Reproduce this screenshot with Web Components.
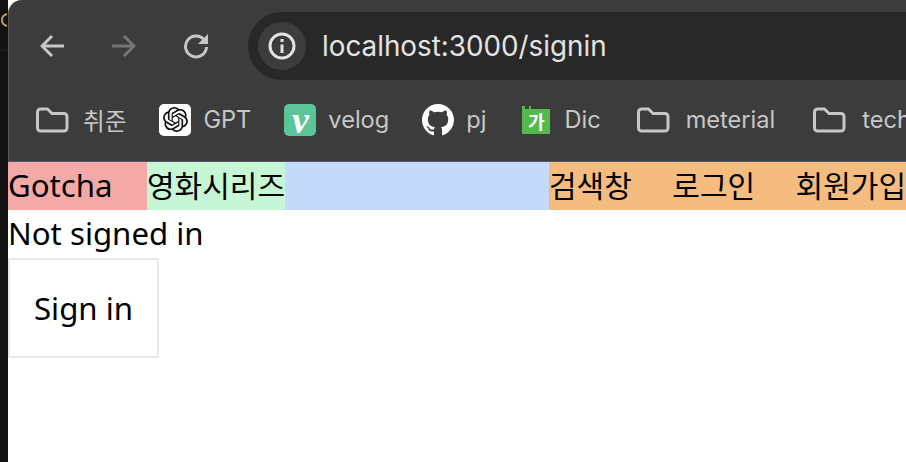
<!DOCTYPE html>
<html lang="ko">
<head>
<meta charset="utf-8">
<title>Gotcha</title>
<style>
  html, body { margin: 0; height: 100%; background: #fff; overflow: hidden; }
</style>
</head>
<body>
<app-window>
  <browser-chrome slot="chrome" url="localhost:3000/signin">
    <bookmark-item icon="folder" label="취준"></bookmark-item>
    <bookmark-item icon="gpt" label="GPT"></bookmark-item>
    <bookmark-item icon="velog" label="velog"></bookmark-item>
    <bookmark-item icon="github" label="pj"></bookmark-item>
    <bookmark-item icon="dic" label="Dic" style="margin-left: 3px; --label-gap: 14px"></bookmark-item>
    <bookmark-item icon="folder" label="meterial" style="margin-left: 2px; --label-gap: 14px"></bookmark-item>
    <bookmark-item icon="folder" label="tech" style="margin-left: 4px; --label-gap: 14px"></bookmark-item>
  </browser-chrome>
  <site-nav></site-nav>
  <signin-panel></signin-panel>
</app-window>

<script>
const ICONS = {
  folder: `<svg width="36" height="26" viewBox="0 0 36 26" fill="none" stroke="#c7c7c7" stroke-width="3" stroke-linejoin="round"><path d="M2.5 5a3 3 0 0 1 3-3h7l4.5 4.5h12a3 3 0 0 1 3 3V21a3 3 0 0 1-3 3H5.5a3 3 0 0 1-3-3z"/></svg>`,
  gpt: `<span class="tile" style="background:#fff"><svg width="25" height="25" viewBox="0 0 24 24" fill="#111"><path d="M22.2819 9.8211a5.9847 5.9847 0 0 0-.5157-4.9108 6.0462 6.0462 0 0 0-6.5098-2.9A6.0651 6.0651 0 0 0 4.9807 4.1818a5.9847 5.9847 0 0 0-3.9977 2.9 6.0462 6.0462 0 0 0 .7427 7.0966 5.98 5.98 0 0 0 .511 4.9107 6.051 6.051 0 0 0 6.5146 2.9001A5.9847 5.9847 0 0 0 13.2599 24a6.0557 6.0557 0 0 0 5.7718-4.2058 5.9894 5.9894 0 0 0 3.9977-2.9001 6.0557 6.0557 0 0 0-.7475-7.0729zm-9.022 12.6081a4.4755 4.4755 0 0 1-2.8764-1.0408l.1419-.0804 4.7783-2.7582a.7948.7948 0 0 0 .3927-.6813v-6.7369l2.02 1.1686a.071.071 0 0 1 .038.052v5.5826a4.504 4.504 0 0 1-4.4945 4.4944zm-9.6607-4.1254a4.4708 4.4708 0 0 1-.5346-3.0137l.142.0852 4.783 2.7582a.7712.7712 0 0 0 .7806 0l5.8428-3.3685v2.3324a.0804.0804 0 0 1-.0332.0615L9.74 19.9502a4.4992 4.4992 0 0 1-6.1408-1.6464zM2.3408 7.8956a4.485 4.485 0 0 1 2.3655-1.9728V11.6a.7664.7664 0 0 0 .3879.6765l5.8144 3.3543-2.0201 1.1685a.0757.0757 0 0 1-.071 0l-4.8303-2.7865A4.504 4.504 0 0 1 2.3408 7.872zm16.5963 3.8558L13.1038 8.364 15.1192 7.2a.0757.0757 0 0 1 .071 0l4.8303 2.7913a4.4944 4.4944 0 0 1-.6765 8.1042v-5.6772a.79.79 0 0 0-.407-.667zm2.0107-3.0231l-.142-.0852-4.7735-2.7818a.7759.7759 0 0 0-.7854 0L9.409 9.2297V6.8974a.0662.0662 0 0 1 .0284-.0615l4.8303-2.7866a4.4992 4.4992 0 0 1 6.6802 4.66zM8.3065 12.863l-2.02-1.1638a.0804.0804 0 0 1-.038-.0567V6.0742a4.4992 4.4992 0 0 1 7.3757-3.4537l-.142.0805L8.704 5.459a.7948.7948 0 0 0-.3927.6813zm1.0976-2.3654l2.602-1.4998 2.6069 1.4998v2.9994l-2.5974 1.4997-2.6067-1.4997Z"/></svg></span>`,
  velog: `<span class="tile velog" style="background:#5bc498">v</span>`,
  github: `<svg width="32" height="32" viewBox="0 0 16 16" fill="#fff"><path d="M8 0C3.58 0 0 3.58 0 8c0 3.54 2.29 6.53 5.47 7.59.4.07.55-.17.55-.38 0-.19-.01-.82-.01-1.49-2.01.37-2.53-.49-2.69-.94-.09-.23-.48-.94-.82-1.13-.28-.15-.68-.52-.01-.53.63-.01 1.08.58 1.23.82.72 1.21 1.87.87 2.33.66.07-.52.28-.87.51-1.07-1.78-.2-3.64-.89-3.64-3.95 0-.87.31-1.59.82-2.15-.08-.2-.36-1.02.08-2.12 0 0 .67-.21 2.2.82.64-.18 1.32-.27 2-.27.68 0 1.36.09 2 .27 1.53-1.04 2.2-.82 2.2-.82.44 1.1.16 1.92.08 2.12.51.56.82 1.27.82 2.15 0 3.07-1.87 3.75-3.65 3.95.29.25.54.73.54 1.48 0 1.07-.01 1.93-.01 2.2 0 .21.15.46.55.38A8.013 8.013 0 0016 8c0-4.42-3.58-8-8-8z"/></svg>`,
  dic: `<span class="dic"><svg width="28" height="28" viewBox="0 0 28 28"><path fill="#52bb4c" d="M0 0h3v3h4V0h2v3h19v25H0z"/></svg><b>가</b></span>`,
};

class AppWindow extends HTMLElement {
  constructor() {
    super();
    this.attachShadow({ mode: "open" });
  }

  connectedCallback() {
    this.shadowRoot.innerHTML = `
      <style>
        :host { display: flex; height: 462px; width: 906px; background: #131313; overflow: hidden; }
        .edge { width: 8px; flex: none; }
        .edge svg { display: block; }
        .main { flex: 1; min-width: 0; display: flex; flex-direction: column; background: #fff; }
      </style>
      <div class="edge">
        <svg width="8" height="60" viewBox="0 0 8 60" fill="none">
          <path d="M7 14c-4 1-5 3-5 6s1 5 5 6" stroke="#b59a6c" stroke-width="2"/>
          <path d="M0 50h8" stroke="#272727"/>
        </svg>
      </div>
      <div class="main">
        <slot name="chrome"></slot>
        <slot></slot>
      </div>
    `;
  }
}

class BrowserChrome extends HTMLElement {
  constructor() {
    super();
    this.attachShadow({ mode: "open" });
  }

  connectedCallback() {
    const url = this.getAttribute("url");
    this.shadowRoot.innerHTML = `
      <style>
        :host {
          display: flex;
          flex-direction: column;
          height: 162px;
          flex: none;
          box-sizing: border-box;
          background: #3c3c3c;
          border-left: 1px solid #575757;
          border-bottom: 1px solid #515a66;
          border-top-left-radius: 14px;
          overflow: hidden;
        }
        .toolbar { display: flex; align-items: center; height: 92px; flex: none; padding-left: 31px; }
        .nav { display: flex; align-items: center; gap: 48px; margin-right: 40px; }
        .nav svg { display: block; }
        .nav svg:last-child { margin-left: -1px; margin-right: -1px; }
        .omnibox {
          flex: 1;
          display: flex;
          align-items: center;
          gap: 16px;
          height: 68px;
          margin-right: -60px;
          padding-left: 10px;
          border-radius: 34px;
          background: #282828;
          font: 27.8px Inter, "Liberation Sans", sans-serif;
          color: #e3e3e3;
        }
        .info {
          width: 48px;
          height: 48px;
          border-radius: 50%;
          background: #3c3c3c;
          display: flex;
          align-items: center;
          justify-content: center;
        }
        .bookmarks {
          display: flex;
          align-items: center;
          gap: 33px;
          flex: 1;
          padding: 0 0 14px 26px;
          white-space: nowrap;
        }
      </style>
      <div class="toolbar">
        <div class="nav">
          <svg width="24" height="24" viewBox="0 0 24 24" fill="none" stroke="#c7c7c7" stroke-width="3"><path d="M24 12H2M12 2 2 12l10 10"/></svg>
          <svg width="24" height="24" viewBox="0 0 24 24" fill="none" stroke="#757575" stroke-width="3"><path d="M0 12h22M12 2l10 10-10 10"/></svg>
          <svg width="26" height="26" viewBox="0 0 26 26" fill="none" stroke="#c7c7c7" stroke-width="3"><path d="M22 8a10.5 10.5 0 1 0 1.5 6"/><path d="M25 1v10H15z" stroke="none" fill="#c7c7c7"/></svg>
        </div>
        <div class="omnibox">
          <span class="info">
            <svg width="28" height="28" viewBox="0 0 28 28" fill="none" stroke="#e3e3e3" stroke-width="3"><circle cx="14" cy="14" r="12"/><path d="M14 12.5V21"/><path d="M14 7v3"/></svg>
          </span>
          <span>${url}</span>
        </div>
      </div>
      <div class="bookmarks"><slot></slot></div>
    `;
  }
}

class BookmarkItem extends HTMLElement {
  constructor() {
    super();
    this.attachShadow({ mode: "open" });
  }

  connectedCallback() {
    const icon = this.getAttribute("icon");
    const label = this.getAttribute("label");
    this.shadowRoot.innerHTML = `
      <style>
        :host {
          display: inline-flex;
          align-items: center;
          gap: var(--label-gap, 12px);
          height: 32px;
          font: 23.6px Inter, "Noto Sans CJK KR", "Liberation Sans", sans-serif;
          color: #c7c7c7;
        }
        .icon { display: flex; align-items: center; justify-content: center; flex: none; }
        .icon svg { display: block; }
        .tile {
          width: 32px;
          height: 32px;
          border-radius: 5px;
          display: flex;
          align-items: center;
          justify-content: center;
        }
        .velog { color: #fff; font: italic bold 38px/28px "Liberation Serif", serif; }
        .dic { position: relative; display: block; width: 28px; height: 28px; }
        .dic b {
          position: absolute;
          left: 0;
          right: 0;
          top: 4px;
          text-align: center;
          color: #fff;
          font: bold 18px/22px "Noto Sans CJK KR", sans-serif;
        }
      </style>
      <span class="icon">${ICONS[icon]}</span>
      <span>${label}</span>
    `;
  }
}

class SiteNav extends HTMLElement {
  constructor() {
    super();
    this.attachShadow({ mode: "open" });
  }

  connectedCallback() {
    this.shadowRoot.innerHTML = `
      <style>
        :host {
          display: flex;
          height: 48px;
          flex: none;
          font: 31.2px/46px "Noto Sans", "Noto Sans CJK KR", sans-serif;
          color: #000;
        }
        .ko { font-family: "Noto Sans CJK KR", sans-serif; font-size: 30px; line-height: 44px; padding-bottom: 4px; }
        .logo { width: 139px; background: #f3a9a7; }
        .series { background: #c6f6d5; }
        .space { flex: 1; background: #c5d9fa; }
        .actions { display: flex; gap: 40.5px; background: #f4bc7f; }
      </style>
      <div class="logo">Gotcha</div>
      <div class="series ko">영화시리즈</div>
      <div class="space"></div>
      <div class="actions ko">
        <span>검색창</span>
        <span>로그인</span>
        <span>회원가입</span>
      </div>
    `;
  }
}

class SigninPanel extends HTMLElement {
  constructor() {
    super();
    this.attachShadow({ mode: "open" });
  }

  connectedCallback() {
    this.shadowRoot.innerHTML = `
      <style>
        :host {
          display: block;
          font: 31.2px/48px "Noto Sans", sans-serif;
          color: #000;
        }
        .status { line-height: 46px; padding-bottom: 2px; }
        button {
          display: block;
          padding: 24px;
          border: 2px solid #e7e7ee;
          background: #fff;
          color: inherit;
          font: inherit;
        }
      </style>
      <div class="status">Not signed in</div>
      <button>Sign in</button>
    `;
  }
}

customElements.define("app-window", AppWindow);
customElements.define("browser-chrome", BrowserChrome);
customElements.define("bookmark-item", BookmarkItem);
customElements.define("site-nav", SiteNav);
customElements.define("signin-panel", SigninPanel);
</script>
</body>
</html>
